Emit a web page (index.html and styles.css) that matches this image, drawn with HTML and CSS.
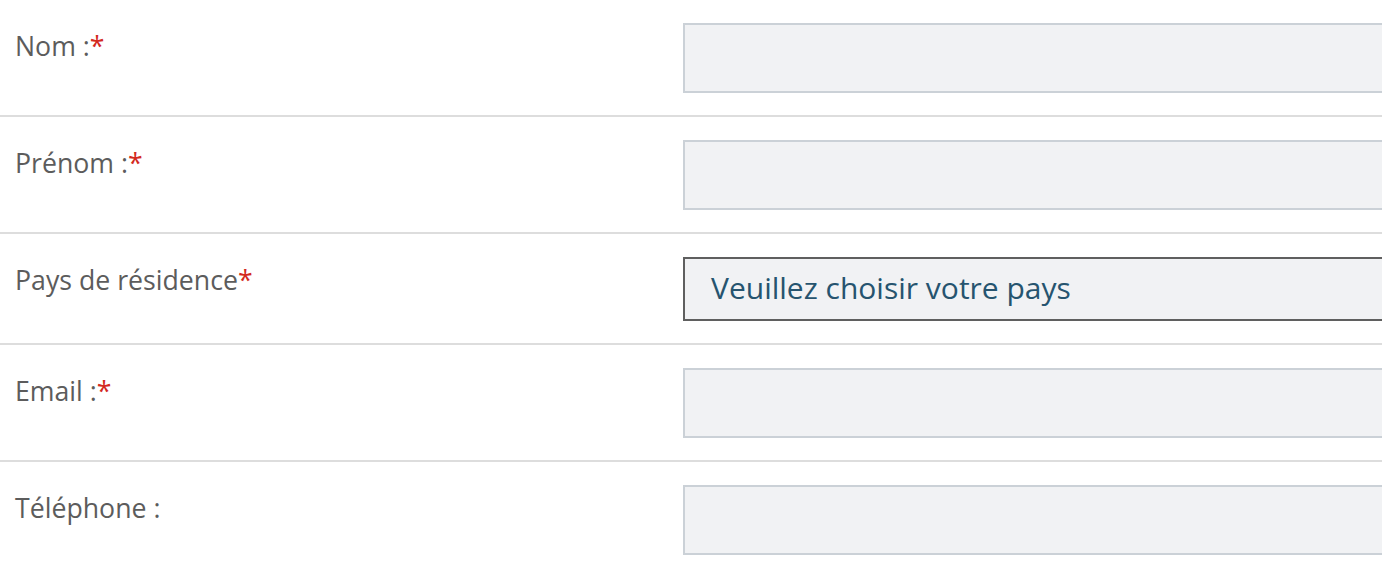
FILE: index.html
```html
<!DOCTYPE html>
<html lang="fr">
<head>
<meta charset="utf-8">
<title>Formulaire</title>
<link rel="stylesheet" href="styles.css">
</head>
<body>
<form class="form">
  <div class="row">
    <label class="label" for="nom">Nom :<span class="req">*</span></label>
    <div class="field"><input class="input" id="nom" type="text"></div>
  </div>
  <div class="row">
    <label class="label" for="prenom">Prénom :<span class="req">*</span></label>
    <div class="field"><input class="input" id="prenom" type="text"></div>
  </div>
  <div class="row">
    <label class="label" for="pays">Pays de résidence<span class="req">*</span></label>
    <div class="field"><div class="select" id="pays">Veuillez choisir votre pays</div></div>
  </div>
  <div class="row">
    <label class="label" for="email">Email :<span class="req">*</span></label>
    <div class="field"><input class="input" id="email" type="text"></div>
  </div>
  <div class="row row-last">
    <label class="label" for="tel">Téléphone :</label>
    <div class="field"><input class="input" id="tel" type="text"></div>
  </div>
</form>
</body>
</html>
```

FILE: styles.css
```css
html, body {
  margin: 0;
  padding: 0;
  background: #ffffff;
  overflow: hidden;
}
body {
  font-family: "Open Sans", "DejaVu Sans", sans-serif;
  width: 1382px;
  height: 564px;
}
.form {
  display: flex;
  flex-direction: column;
}
.row {
  display: grid;
  grid-template-columns: 683px 1fr;
  padding: 23px 0 22px;
  border-bottom: 2px solid #dddddd;
}
.row-last {
  border-bottom: none;
}
.label {
  padding: 5px 0 0 15px;
  font-size: 26.7px;
  color: #5c5c5c;
  line-height: 36px;
}
.req {
  color: #d3291e;
}
.field {
  overflow: hidden;
  margin-right: -40px;
}
.input {
  display: block;
  box-sizing: border-box;
  width: 100%;
  height: 70px;
  margin: 0;
  background: #f1f2f4;
  border: 2px solid #cbd1d7;
  border-radius: 0;
  font: inherit;
  outline: none;
}
.select {
  box-sizing: border-box;
  height: 64px;
  background: #f1f2f4;
  border: 2px solid #5f5f5f;
  padding: 0 0 3px 26px;
  display: flex;
  align-items: center;
  font-size: 30px;
  color: #26546f;
}
```
